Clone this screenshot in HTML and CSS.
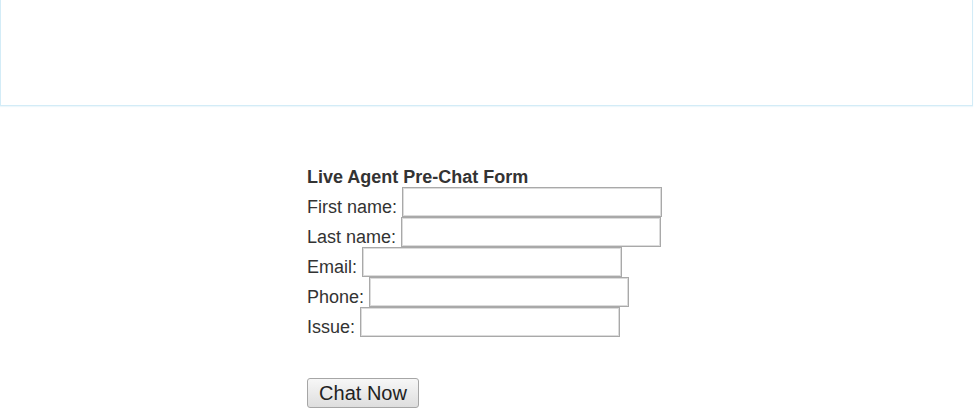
FILE: index.html
```html
<!DOCTYPE html>
<html>
<head>
<meta charset="utf-8">
<link rel="stylesheet" href="styles.css">
</head>
<body>
<div class="header"></div>
<form class="prechat">
  <div class="title">Live Agent Pre-Chat Form</div>
  <div class="row"><label class="lbl">First name:</label><input class="field" type="text"></div>
  <div class="row"><label class="lbl">Last name:</label><input class="field" type="text"></div>
  <div class="row"><label class="lbl">Email:</label><input class="field" type="text"></div>
  <div class="row"><label class="lbl">Phone:</label><input class="field" type="text"></div>
  <div class="row"><label class="lbl">Issue:</label><input class="field" type="text"></div>
  <div class="actions"><button class="btn" type="button">Chat Now</button></div>
</form>
</body>
</html>
```
FILE: styles.css
```css
html, body {
  margin: 0;
  padding: 0;
  background: #ffffff;
}
body {
  font-family: "Liberation Sans", Arial, sans-serif;
  color: #333333;
}
.header {
  height: 105px;
  margin-right: 1px;
  border-left: 1px solid #d3ecf7;
  border-right: 1px solid #d3ecf7;
  border-bottom: 1px solid #d3ecf7;
  box-shadow: 0 1px 1px #eef7fb;
}
.prechat {
  margin: 61px 0 0 0;
  padding-left: 307px;
}
.title {
  font-size: 18px;
  font-weight: bold;
  line-height: 20px;
}
.row {
  display: flex;
  align-items: flex-end;
  gap: 5px;
  height: 30px;
}
.lbl {
  font-size: 18px;
  line-height: 18px;
  margin-bottom: 1px;
}
.field {
  box-sizing: border-box;
  width: 260px;
  height: 30px;
  margin: 0;
  padding: 2px 4px;
  border: 1px solid #a9a9a9;
  box-shadow: inset 0 0 0 1px #dcdcdc;
  background: #ffffff;
  font-family: "Liberation Sans", Arial, sans-serif;
  font-size: 16px;
}
.actions {
  margin-top: 41px;
}
.btn {
  box-sizing: border-box;
  width: 112px;
  height: 30px;
  padding: 0;
  margin: 0;
  border: 1px solid #a6a6a6;
  border-radius: 3px;
  background: linear-gradient(#f7f7f7, #dedede);
  font-family: "Liberation Sans", Arial, sans-serif;
  font-size: 20px;
  color: #222222;
}
```
